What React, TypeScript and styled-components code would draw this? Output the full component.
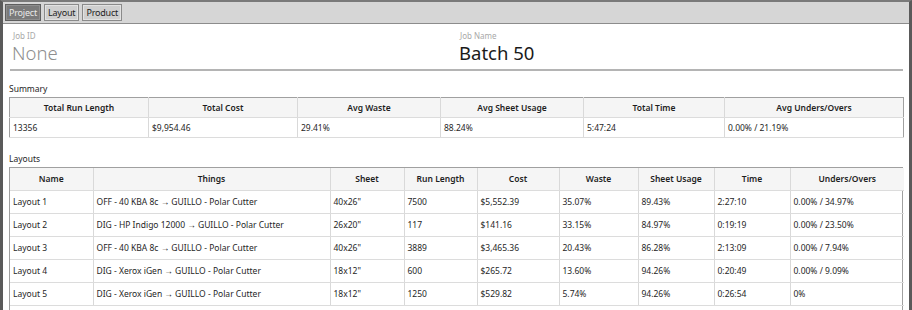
import React from "react";
import styled, { createGlobalStyle } from "styled-components";

const Global = createGlobalStyle`
  html, body { margin: 0; padding: 0; background: #ffffff; }
  body { font-family: "Noto Sans", "Open Sans", sans-serif; }
  * { box-sizing: border-box; }
`;

const Window = styled.div`
  width: 912px;
  height: 310px;
  overflow: hidden;
  border-left: 3px solid #5a5a5a;
  border-right: 3px solid #5a5a5a;
  border-top: 2px solid #7a7a7a;
  display: flex;
  flex-direction: column;
  background: #fff;
`;

const TabBar = styled.div`
  height: 22px;
  flex: none;
  background: #d6d6d6;
  border-bottom: 1px solid #8c8c8c;
  display: flex;
  align-items: center;
  gap: 3px;
  padding: 0 2px;
`;

const Tab = styled.div<{ $active?: boolean }>`
  height: 17px;
  padding: 0 3px;
  display: flex;
  align-items: center;
  font-size: 9px;
  letter-spacing: -0.2px;
  color: ${(p) => (p.$active ? "#e8e8e8" : "#1e1e1e")};
  background: ${(p) => (p.$active ? "#7a7a7a" : "#cfcfcf")};
  border: 1px solid ${(p) => (p.$active ? "#5e5e5e" : "#8a8a8a")};
  box-shadow: inset 0 0 0 1px ${(p) => (p.$active ? "#8e8e8e" : "#e2e2e2")};
`;

const Content = styled.div`
  flex: 1;
  padding: 6px 6px 0 6px;
  display: flex;
  flex-direction: column;
`;

const JobGrid = styled.div`
  display: grid;
  grid-template-columns: 447px 1fr;
  padding: 0 0 4px 0;
  border-bottom: 2px solid #b4b4b4;
  margin: 0 0 0 1px;
`;

const Field = styled.div`
  display: flex;
  flex-direction: column;
  padding-left: 2px;
`;

const FieldLabel = styled.div`
  font-size: 8px;
  color: #a8a8a8;
  line-height: 11px;
  padding-left: 1px;
`;

const FieldValue = styled.div<{ $muted?: boolean }>`
  font-size: 18.5px;
  line-height: 24px;
  color: ${(p) => (p.$muted ? "#8e8e8e" : "#1a1a1a")};
  font-weight: ${(p) => (p.$muted ? 300 : 400)};
`;

const SectionLabel = styled.div<{ $top: number }>`
  font-size: 8.5px;
  color: #1e1e1e;
  line-height: 11px;
  margin-top: ${(p) => p.$top}px;
  margin-bottom: 3px;
`;

const Grid = styled.table`
  border-collapse: collapse;
  table-layout: fixed;
  width: 894px;
  border: 1px solid #a0a0a0;
  font-size: 8.5px;
  color: #262626;
`;

const LayoutsBox = styled.div`
  border: 1px solid #a0a0a0;
  border-bottom: none;
  width: 894px;
  flex: 1;
`;

const LayoutsGrid = styled.table`
  border-collapse: collapse;
  table-layout: fixed;
  width: 100%;
  font-size: 8.5px;
  color: #262626;
`;

const Th = styled.th<{ $h: number }>`
  height: ${(p) => p.$h}px;
  background: #f5f5f5;
  font-weight: 600;
  text-align: center;
  border-right: 1px solid #d9d9d9;
  border-bottom: 1px solid #dcdcdc;
  padding: 0 3px;
  white-space: nowrap;
  color: #1e1e1e;
  &:last-child { border-right: none; }
`;

const Td = styled.td<{ $h: number }>`
  height: ${(p) => p.$h}px;
  text-align: left;
  border-right: 1px solid #d9d9d9;
  border-bottom: 1px solid #dcdcdc;
  padding: 0 3px;
  white-space: nowrap;
  &:last-child { border-right: none; }
`;

const summaryCols = [139, 149, 143, 143, 141, 179];
const summaryHead = ["Total Run Length", "Total Cost", "Avg Waste", "Avg Sheet Usage", "Total Time", "Avg Unders/Overs"];
const summaryRow = ["13356", "$9,954.46", "29.41%", "88.24%", "5:47:24", "0.00% / 21.19%"];

const layoutCols = [83, 237, 74, 73, 82, 79, 76, 76, 114];
const layoutHead = ["Name", "Things", "Sheet", "Run Length", "Cost", "Waste", "Sheet Usage", "Time", "Unders/Overs"];
const layoutRows = [
  ["Layout 1", "OFF - 40 KBA 8c \u2192 GUILLO - Polar Cutter", "40x26\"", "7500", "$5,552.39", "35.07%", "89.43%", "2:27:10", "0.00% / 34.97%"],
  ["Layout 2", "DIG - HP Indigo 12000 \u2192 GUILLO - Polar Cutter", "26x20\"", "117", "$141.16", "33.15%", "84.97%", "0:19:19", "0.00% / 23.50%"],
  ["Layout 3", "OFF - 40 KBA 8c \u2192 GUILLO - Polar Cutter", "40x26\"", "3889", "$3,465.36", "20.43%", "86.28%", "2:13:09", "0.00% / 7.94%"],
  ["Layout 4", "DIG - Xerox iGen \u2192 GUILLO - Polar Cutter", "18x12\"", "600", "$265.72", "13.60%", "94.26%", "0:20:49", "0.00% / 9.09%"],
  ["Layout 5", "DIG - Xerox iGen \u2192 GUILLO - Polar Cutter", "18x12\"", "1250", "$529.82", "5.74%", "94.26%", "0:26:54", "0%"],
];

export default function App() {
  return (
    <>
      <Global />
      <Window>
        <TabBar>
          <Tab $active>Project</Tab>
          <Tab>Layout</Tab>
          <Tab>Product</Tab>
        </TabBar>
        <Content>
          <JobGrid>
            <Field>
              <FieldLabel>Job ID</FieldLabel>
              <FieldValue $muted>None</FieldValue>
            </Field>
            <Field>
              <FieldLabel>Job Name</FieldLabel>
              <FieldValue>Batch 50</FieldValue>
            </Field>
          </JobGrid>
          <SectionLabel $top={12}>Summary</SectionLabel>
          <Grid>
            <colgroup>
              {summaryCols.map((w, i) => (
                <col key={i} style={{ width: w }} />
              ))}
            </colgroup>
            <thead>
              <tr>
                {summaryHead.map((h) => (
                  <Th key={h} $h={20}>{h}</Th>
                ))}
              </tr>
            </thead>
            <tbody>
              <tr>
                {summaryRow.map((c, i) => (
                  <Td key={i} $h={20}>{c}</Td>
                ))}
              </tr>
            </tbody>
          </Grid>
          <SectionLabel $top={15}>Layouts</SectionLabel>
          <LayoutsBox>
            <LayoutsGrid>
              <colgroup>
                {layoutCols.map((w, i) => (
                  <col key={i} style={{ width: w }} />
                ))}
              </colgroup>
              <thead>
                <tr>
                  {layoutHead.map((h) => (
                    <Th key={h} $h={22}>{h}</Th>
                  ))}
                </tr>
              </thead>
              <tbody>
                {layoutRows.map((r, ri) => (
                  <tr key={ri}>
                    {r.map((c, i) => (
                      <Td key={i} $h={23}>{c}</Td>
                    ))}
                  </tr>
                ))}
              </tbody>
            </LayoutsGrid>
          </LayoutsBox>
        </Content>
      </Window>
    </>
  );
}
